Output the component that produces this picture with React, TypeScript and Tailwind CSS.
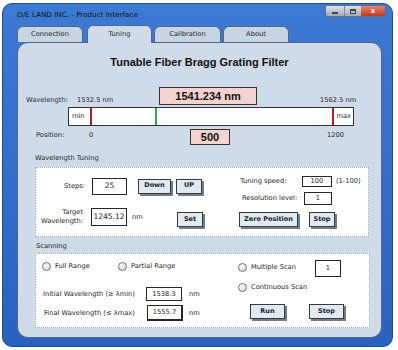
import React from "react";

const sans = "font-['DejaVu_Sans',sans-serif]";

function Btn({ label, w }: { label: string; w: string }) {
  return (
    <div
      className={`${w} h-[15px] flex-none border border-[#3a3a3a] bg-[#e1e9f3] shadow-[2px_2px_0_#767c84] flex items-center justify-center text-[6.5px] font-bold text-[#1a1a1a]`}
    >
      {label}
    </div>
  );
}

function Field({ value, cls }: { value: string; cls: string }) {
  return (
    <div
      className={`${cls} flex-none border border-[#262626] bg-white flex items-center justify-center text-[#222]`}
    >
      {value}
    </div>
  );
}

function Radio() {
  return (
    <div className="w-[9px] h-[9px] flex-none rounded-full border border-[#6b7178] bg-gradient-to-br from-white to-[#d3d8de]" />
  );
}

export default function App() {
  return (
    <div className={`w-[398px] h-[350px] bg-white pt-[3px] pl-[2px] ${sans} text-[6.7px] text-[#1e1e1e]`}>
      {/* window */}
      <div className="w-[391px] h-[344px] rounded-[10px] border border-[#1f4b92] bg-gradient-to-b from-[#3d7ad3] to-[#2a62bd]">
        {/* title bar */}
        <div className="h-[21px] flex items-start pl-[14px]">
          <span className="mt-[6px] leading-[10px] text-[7.2px] text-[#111]">
            O/E LAND INC. - Product Interface
          </span>
          <div className="ml-auto mr-[6px] mt-[1px] h-[12px] flex rounded-b-[3px] overflow-hidden border border-[#5d6f8a]">
            <div className="w-[19px] flex items-center justify-center bg-gradient-to-b from-[#dfe3e8] to-[#a3abb6] border-r border-[#7b8696]">
              <div className="w-[6px] h-[2px] bg-[#444] mt-[4px]" />
            </div>
            <div className="w-[16px] flex items-center justify-center bg-gradient-to-b from-[#dfe3e8] to-[#a3abb6]">
              <div className="w-[6px] h-[5px] border border-[#444] border-t-2" />
            </div>
            <div className="w-[24px] flex items-center justify-center bg-gradient-to-b from-[#e8826c] to-[#c2361f] text-white text-[7px] font-bold leading-none">
              x
            </div>
          </div>
        </div>

        {/* tabs */}
        <div className="h-[17px] flex items-end pl-[14px]">
          <div className="w-[66px] h-[16px] rounded-t-[6px] border border-b-0 border-[#4f6886] bg-[#c6d4e4] flex items-center justify-center">
            Connection
          </div>
          <div className="relative z-10 -mb-px ml-[4px] w-[65px] h-[18px] rounded-t-[6px] border border-b-0 border-[#4f6886] bg-[#cfdbe8] flex items-center justify-center pb-[1px]">
            Tuning
          </div>
          <div className="ml-[2px] w-[67px] h-[16px] rounded-t-[6px] border border-b-0 border-[#4f6886] bg-[#c6d4e4] flex items-center justify-center">
            Calibration
          </div>
          <div className="ml-[2px] w-[66px] h-[16px] rounded-t-[6px] border border-b-0 border-[#4f6886] bg-[#c6d4e4] flex items-center justify-center">
            About
          </div>
        </div>

        {/* panel */}
        <div className="ml-[14px] w-[365px] h-[296px] rounded-[11px] border border-[#4f6886] bg-[#cfdbe8] pt-[12px]">
          <div className="h-[14px] leading-[14px] text-center text-[11px] font-bold text-[#111] font-['Liberation_Sans',sans-serif]">
            Tunable Fiber Bragg Grating Filter
          </div>

          {/* wavelength row */}
          <div className="mt-[18px] h-[18px] flex items-end pl-[8px]">
            <div className="w-[51px] leading-[10px]">Wavelength:</div>
            <div className="w-[82px] leading-[10px]">1532.5 nm</div>
            <div className="w-[98px] h-[18px] border border-[#333] bg-[#f3d3d1] flex items-center justify-center text-[11px] font-bold text-[#111] font-['Liberation_Sans',sans-serif]">
              1541.234 nm
            </div>
            <div className="ml-[63px] leading-[10px]">1562.5 nm</div>
          </div>

          {/* slider bar */}
          <div className="relative mt-[2px] ml-[50px] w-[286px] h-[19px] border border-[#333] bg-white flex items-center justify-between pl-[3px] pr-[2px]">
            <span>min</span>
            <span>max</span>
            <div className="absolute left-[21px] top-0 w-[2px] h-full bg-[#b21e23]" />
            <div className="absolute left-[86px] top-0 w-[2px] h-full bg-[#2cb24b]" />
            <div className="absolute left-[263px] top-0 w-[2px] h-full bg-[#b21e23]" />
          </div>

          {/* position row */}
          <div className="mt-[3px] h-[16px] flex items-start pl-[18px]">
            <div className="w-[53px] mt-[1px] leading-[10px]">Position:</div>
            <div className="w-[101px] mt-[1px] leading-[10px]">0</div>
            <div className="w-[40px] h-[16px] border border-[#333] bg-[#f3d3d1] flex items-center justify-center text-[11px] font-bold text-[#111] font-['Liberation_Sans',sans-serif]">
              500
            </div>
            <div className="ml-[97px] mt-[1px] leading-[10px]">1200</div>
          </div>

          {/* wavelength tuning */}
          <div className="mt-[8px] pl-[17px] leading-[10px]">Wavelength Tuning</div>
          <div className="mt-[4px] ml-[17px] w-[334px] h-[70px] border border-dotted border-[#9ea6b0] bg-white flex">
            <div className="w-[203px] flex-none pt-[9px]">
              <div className="h-[18px] flex items-center">
                <div className="w-[49px] text-right">Steps:</div>
                <Field value="25" cls="ml-[7px] w-[35px] h-[17px] text-[7.5px]" />
                <div className="ml-[11px]">
                  <Btn label="Down" w="w-[33px]" />
                </div>
                <div className="ml-[5px]">
                  <Btn label="UP" w="w-[26px]" />
                </div>
              </div>
              <div className="mt-[13px] flex items-start">
                <div className="w-[47px] text-right leading-[9px]">
                  Target
                  <br />
                  Wavelength:
                </div>
                <Field value="1245.12" cls="ml-[8px] w-[36px] h-[18px] text-[7.5px]" />
                <div className="ml-[5px] w-[45px] mt-[4px] leading-[10px]">nm</div>
                <div className="mt-[4px]">
                  <Btn label="Set" w="w-[26px]" />
                </div>
              </div>
            </div>
            <div className="pt-[8px]">
              <div className="h-[11px] flex items-center">
                <div className="w-[63px] pl-[1px]">Tuning speed:</div>
                <Field value="100" cls="w-[30px] h-[11px]" />
                <div className="ml-[4px]">(1-100)</div>
              </div>
              <div className="mt-[5px] h-[13px] flex items-center">
                <div className="w-[65px] pl-[3px]">Resolution level:</div>
                <Field value="1" cls="w-[28px] h-[13px]" />
              </div>
              <div className="mt-[7px] flex">
                <Btn label="Zero Position" w="w-[59px]" />
                <div className="ml-[11px]">
                  <Btn label="Stop" w="w-[26px]" />
                </div>
              </div>
            </div>
          </div>

          {/* scanning */}
          <div className="mt-[4px] pl-[18px] leading-[10px]">Scanning</div>
          <div className="mt-[2px] ml-[17px] w-[335px] h-[75px] border border-dotted border-[#9ea6b0] bg-white flex">
            <div className="w-[201px] flex-none pt-[8px]">
              <div className="h-[9px] flex items-center">
                <div className="w-[76px] ml-[6px] flex items-center">
                  <Radio />
                  <span className="ml-[4px]">Full Range</span>
                </div>
                <Radio />
                <span className="ml-[4px]">Partial Range</span>
              </div>
              <div className="mt-[16px] h-[14px] flex items-center">
                <div className="w-[110px] pl-[7px]">Initial Wavelength (≥ λmin)</div>
                <Field value="1538.3" cls="w-[36px] h-[14px]" />
                <div className="ml-[7px]">nm</div>
              </div>
              <div className="mt-[4px] h-[16px] flex items-center">
                <div className="w-[111px] pl-[8px]">Final Wavelength (≤ λmax)</div>
                <Field value="1555.7" cls="w-[36px] h-[16px] border-r-2 border-b-2" />
                <div className="ml-[6px]">nm</div>
              </div>
            </div>
            <div className="pt-[6px]">
              <div className="flex items-start">
                <div className="ml-[1px] mt-[3px]">
                  <Radio />
                </div>
                <div className="ml-[4px] mt-[2px] w-[64px] leading-[10px]">Multiple Scan</div>
                <Field value="1" cls="w-[26px] h-[17px]" />
              </div>
              <div className="mt-[6px] h-[9px] flex items-center">
                <div className="ml-[1px]">
                  <Radio />
                </div>
                <span className="ml-[4px]">Continuous Scan</span>
              </div>
              <div className="mt-[12px] flex">
                <div className="ml-[13px]">
                  <Btn label="Run" w="w-[35px]" />
                </div>
                <div className="ml-[24px]">
                  <Btn label="Stop" w="w-[35px]" />
                </div>
              </div>
            </div>
          </div>
        </div>
      </div>
    </div>
  );
}
